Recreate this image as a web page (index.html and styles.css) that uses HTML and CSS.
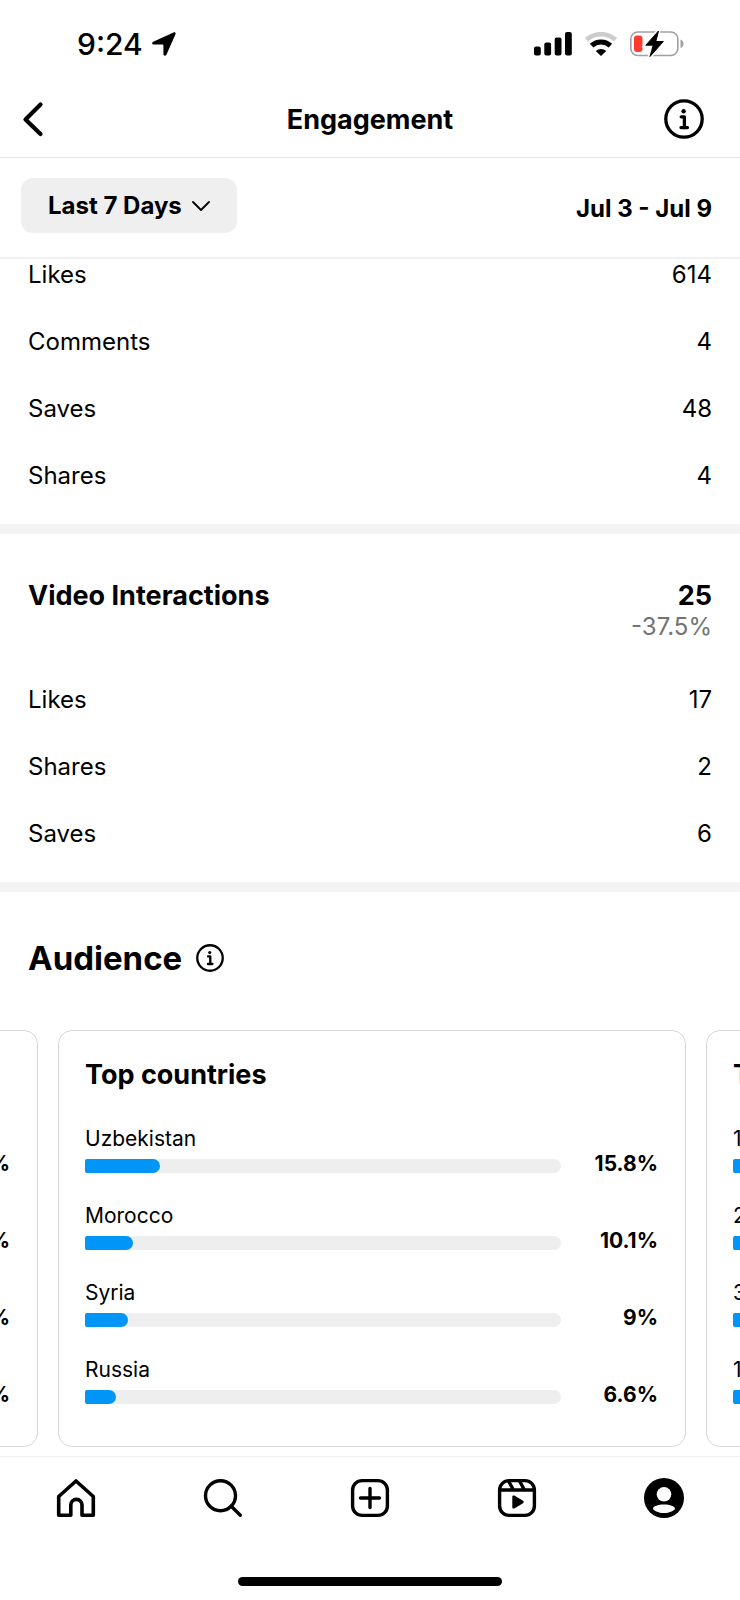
FILE: index.html
```html
<!DOCTYPE html>
<html lang="en">
<head>
    <meta charset="UTF-8">
    <meta name="viewport" content="width=device-width, initial-scale=1.0">
    <title>Engagement</title>
    <link rel="stylesheet" href="styles.css">
</head>
<body>
    <div class="status-bar">
        <div class="status-left">
            <span class="time">9:24</span>
            <svg width="24" height="24" viewBox="0 0 24 24" aria-hidden="true">
                <path d="M1.2 9.800 21.500.5c1.500-.6 2.500.4 1.900 1.900L14.400 22.700c-.7 1.500-3 1.200-3-.6v-8.700a.8.8 0 0 0-.8-.8H1.900C-.1 12.600-.4 10.500 1.200 9.800z"/>
            </svg>
        </div>
        <div class="status-right">
            <svg width="38" height="24" viewBox="0 0 38 24" aria-hidden="true">
                <rect x="0" y="14.500" width="6.800" height="9" rx="2"/>
                <rect x="10.300" y="10.500" width="6.800" height="13" rx="2"/>
                <rect x="20.700" y="5.500" width="6.800" height="18" rx="2"/>
                <rect x="31" y="0" width="6.800" height="23.500" rx="2"/>
            </svg>
            <svg width="34" height="24" viewBox="0 0 34 24" aria-hidden="true">
                <path d="M2.500 7.800A21.500 21.500 0 0 1 31.500 7.800" fill="none" stroke="#cccccc" stroke-width="4.600"/>
                <path d="M7.600 13.600A13.800 13.800 0 0 1 26.400 13.600" fill="none" stroke="#000" stroke-width="5"/>
                <path d="M17 24l-5.200-5a8 8 0 0 1 10.400 0z"/>
            </svg>
            <svg width="54" height="26" viewBox="0 0 54 26" aria-hidden="true">
                <rect x=".8" y="1" width="47" height="23.500" rx="7" fill="none" stroke="#a0a0a0" stroke-width="1.600"/>
                <path d="M50.500 8.500c4 1.500 4 7 0 8.500z" fill="#a0a0a0"/>
                <rect x="4" y="4.500" width="8.500" height="16.500" rx="3" fill="#ff3b30"/>
                <path d="M28.500 0 15.800 14.200h7.400L20 25.500l13.300-15h-7.500z" stroke="#fff" stroke-width="4"/>
                <path d="M28.500 0 15.800 14.200h7.400L20 25.500l13.300-15h-7.500z" stroke="#000" stroke-linejoin="round"/>
            </svg>
        </div>
    </div>

    <header class="header">
        <button class="icon-button back" aria-label="Back">
            <svg width="40" height="40" viewBox="0 0 40 40" fill="none" stroke="#000" stroke-width="4.200" stroke-linecap="round" stroke-linejoin="round">
                <path d="M18.500 5.500 3.500 20.500 18.500 35"/>
            </svg>
        </button>
        <h1 class="title">Engagement</h1>
        <button class="icon-button info" aria-label="Information">
            <svg width="40" height="40" viewBox="0 0 40 40" fill="none" stroke="#000" stroke-width="3.300">
                <circle cx="20" cy="20" r="18.200"/>
                <circle cx="19.600" cy="12.300" r="2.200" fill="#000" stroke="none"/>
                <path d="M17.200 17.800h3.200v11M17 28.600h6.500" stroke-linecap="round" stroke-linejoin="round"/>
            </svg>
        </button>
    </header>

    <div class="filter-bar">
        <button class="period">
            Last 7 Days
            <svg width="18" height="12" viewBox="0 0 18 12" fill="none" stroke="#000" stroke-width="1.800" stroke-linecap="round" stroke-linejoin="round" aria-hidden="true">
                <path d="M1 2 9 10 17 2"/>
            </svg>
        </button>
        <span class="dates">Jul 3 - Jul 9</span>
    </div>

    <main>
        <section class="section first">
            <table class="stats">
                <tr><th scope="row">Likes</th><td>614</td></tr>
                <tr><th scope="row">Comments</th><td>4</td></tr>
                <tr><th scope="row">Saves</th><td>48</td></tr>
                <tr><th scope="row">Shares</th><td>4</td></tr>
            </table>
        </section>

        <section class="section">
            <div class="section-head">
                <h2>Video Interactions</h2>
                <div class="total">
                    <strong>25</strong>
                    <span class="change">-37.5%</span>
                </div>
            </div>
            <table class="stats">
                <tr><th scope="row">Likes</th><td>17</td></tr>
                <tr><th scope="row">Shares</th><td>2</td></tr>
                <tr><th scope="row">Saves</th><td>6</td></tr>
            </table>
        </section>

        <section class="audience">
            <div class="audience-head">
                <h2>Audience</h2>
                <button class="icon-button" aria-label="About audience">
                    <svg width="28" height="28" viewBox="0 0 40 40" fill="none" stroke="#000" stroke-width="3.300">
                        <circle cx="20" cy="20" r="18.200"/>
                        <circle cx="19.600" cy="12.300" r="2.200" fill="#000" stroke="none"/>
                        <path d="M17.200 17.800h3.200v11M17 28.600h6.500" stroke-linecap="round" stroke-linejoin="round"/>
                    </svg>
                </button>
            </div>

            <div class="cards">
                <article class="card">
                    <h3></h3>
                    <ul>
                        <li><span class="name"></span><div class="bar-row"><div class="bar"></div><b>%</b></div></li>
                        <li><span class="name"></span><div class="bar-row"><div class="bar"></div><b>%</b></div></li>
                        <li><span class="name"></span><div class="bar-row"><div class="bar"></div><b>%</b></div></li>
                        <li><span class="name"></span><div class="bar-row"><div class="bar"></div><b>%</b></div></li>
                    </ul>
                </article>
                <article class="card">
                    <h3>Top countries</h3>
                    <ul>
                        <li><span class="name">Uzbekistan</span><div class="bar-row"><div class="bar"><div class="fill" style="width: 15.8%"></div></div><b>15.8%</b></div></li>
                        <li><span class="name">Morocco</span><div class="bar-row"><div class="bar"><div class="fill" style="width: 10.1%"></div></div><b>10.1%</b></div></li>
                        <li><span class="name">Syria</span><div class="bar-row"><div class="bar"><div class="fill" style="width: 9%"></div></div><b>9%</b></div></li>
                        <li><span class="name">Russia</span><div class="bar-row"><div class="bar"><div class="fill" style="width: 6.6%"></div></div><b>6.6%</b></div></li>
                    </ul>
                </article>
                <article class="card">
                    <h3>T</h3>
                    <ul>
                        <li><span class="name">1</span><div class="bar-row"><div class="bar"><div class="fill" style="width: 10%"></div></div></div></li>
                        <li><span class="name">2</span><div class="bar-row"><div class="bar"><div class="fill" style="width: 10%"></div></div></div></li>
                        <li><span class="name">3</span><div class="bar-row"><div class="bar"><div class="fill" style="width: 10%"></div></div></div></li>
                        <li><span class="name">1</span><div class="bar-row"><div class="bar"><div class="fill" style="width: 10%"></div></div></div></li>
                    </ul>
                </article>
            </div>
        </section>
    </main>

    <nav class="tab-bar">
        <div class="tabs">
            <a href="#" aria-label="Home">
                <svg width="40" height="40" viewBox="0 0 40 40" fill="none" stroke="#000" stroke-width="3.600" stroke-linejoin="round">
                    <path d="M20 3 37.300 18.500v18.700H26V27a5.300 5.300 0 0 0-11.200 0v10.200H2.700V18.500z"/>
                </svg>
            </a>
            <a href="#" aria-label="Search">
                <svg width="40" height="40" viewBox="0 0 40 40" fill="none" stroke="#000" stroke-width="3.400" stroke-linecap="round">
                    <circle cx="17.500" cy="17.700" r="15"/>
                    <path d="M28.500 28.500 37.300 37.300"/>
                </svg>
            </a>
            <a href="#" aria-label="New post">
                <svg width="40" height="40" viewBox="0 0 40 40" fill="none" stroke="#000" stroke-width="3.400" stroke-linecap="round">
                    <rect x="2.600" y="2.600" width="34.800" height="34.800" rx="9.500"/>
                    <path d="M20 10.500v19M10.500 20h19"/>
                </svg>
            </a>
            <a href="#" aria-label="Reels">
                <svg width="40" height="40" viewBox="0 0 40 40" fill="none" stroke="#000" stroke-width="3.400">
                    <rect x="2.600" y="2.600" width="34.800" height="34.800" rx="9.500"/>
                    <path d="M3 12h34M11.500 3l5 9M22.500 3l5 9"/>
                    <path d="M15.300 18.800v10.400c0 1.200 1 1.700 2 1.200l8.700-5.200c1-.6 1-1.800 0-2.400l-8.700-5.200c-1-.5-2 0-2 1.200z" fill="#000" stroke="none"/>
                </svg>
            </a>
            <a href="#" aria-label="Profile">
                <svg width="40" height="40" viewBox="0 0 40 40">
                    <circle cx="20" cy="20" r="20"/>
                    <circle cx="20" cy="16.300" r="7.300" fill="#fff"/>
                    <path d="M9 30.500c0-2 5-4 11-4s11 2 11 4c0 1.800-5.500 4.600-11 4.600s-11-2.800-11-4.600z" fill="#fff"/>
                </svg>
            </a>
        </div>
        <div class="home-indicator"></div>
    </nav>
</body>
</html>
```
FILE: styles.css
```css
* {
    box-sizing: border-box;
}
body {
    margin: 0;
    min-height: 100vh;
    display: flex;
    flex-direction: column;
    font-family: Inter, "Liberation Sans", sans-serif;
    font-size: 24px;
    line-height: 32px;
    color: #000;
    background-color: #fff;
}
h1, h2, h3, ul {
    margin: 0;
    padding: 0;
}
button {
    border: 0;
    font: inherit;
    color: inherit;
    cursor: pointer;
}
svg {
    display: block;
}

/* status bar */
.status-bar {
    display: flex;
    justify-content: space-between;
    align-items: center;
    height: 88px;
    padding: 0 56px 0 77px;
}
.status-left {
    display: flex;
    align-items: center;
    gap: 9px;
}
.time {
    font-size: 30px;
    font-weight: 500;
}
.status-right {
    display: flex;
    align-items: center;
    gap: 12px;
}

/* header */
.header {
    display: grid;
    grid-template-columns: 1fr auto 1fr;
    align-items: center;
    height: 70px;
    padding: 0 36px 8px 22px;
    border-bottom: 1px solid #e3e3e3;
}
.title {
    padding: 2px 0 0 14px;
    font-size: 27px;
    font-weight: 700;
}
.icon-button {
    padding: 0;
    background: none;
}
.back {
    justify-self: start;
}
.info {
    justify-self: end;
}

/* filter bar */
.filter-bar {
    display: flex;
    justify-content: space-between;
    align-items: center;
    height: 101px;
    padding: 0 28px 4px 21px;
    border-bottom: 2px solid #f1f1f1;
    font-weight: 700;
}
.period {
    display: flex;
    align-items: center;
    gap: 10px;
    height: 55px;
    padding: 0 27px;
    border-radius: 12px;
    background-color: #efefef;
}
.dates {
    padding-top: 6px;
}

/* stats */
.section {
    padding: 46px 28px 32px;
    border-bottom: 10px solid #f4f4f4;
}
.section.first {
    padding-top: 0;
}
.section-head {
    display: flex;
    justify-content: space-between;
    align-items: flex-start;
    margin-bottom: 42px;
}
.section-head h2, .section-head strong, .card h3 {
    font-size: 27px;
    font-weight: 700;
}
.total {
    display: flex;
    flex-direction: column;
    align-items: flex-end;
}
.change {
    line-height: 30px;
    color: #737373;
}
.stats {
    width: 100%;
    border-collapse: collapse;
}
.stats th, .stats td {
    padding: 0;
    font-weight: 400;
    text-align: left;
}
.stats td {
    text-align: right;
}
.stats tr + tr th, .stats tr + tr td {
    padding-top: 35px;
}

/* audience */
.audience {
    padding: 46px 0 9px;
}
.audience-head {
    display: flex;
    align-items: center;
    gap: 14px;
    padding: 0 28px;
    margin-bottom: 52px;
}
.audience-head h2 {
    font-size: 33px;
    line-height: 40px;
    font-weight: 700;
}
.cards {
    display: flex;
    justify-content: center;
    gap: 20px;
    padding-left: 4px;
    overflow: hidden;
}
.card {
    flex: 0 0 calc(100% - 108px);
    padding: 28px 27px 42px 26px;
    border: 1px solid #d6d6d6;
    border-radius: 14px;
}
.card h3 {
    height: 32px;
    margin-bottom: 36px;
}
.card ul {
    display: flex;
    flex-direction: column;
    gap: 31px;
    list-style: none;
}
.name {
    display: block;
    height: 24px;
    margin-bottom: 2px;
    font-size: 21px;
    line-height: 24px;
}
.bar-row {
    display: grid;
    grid-template-columns: 1fr 97px;
    align-items: end;
    height: 20px;
}
.bar-row b {
    font-size: 21px;
    line-height: 18px;
    font-weight: 700;
    text-align: right;
}
.bar {
    height: 14px;
    border-radius: 2px 7px 7px 2px;
    background-color: #eee;
}
.fill {
    height: 14px;
    border-radius: 2px 7px 7px 2px;
    background-color: #0095f6;
}

/* tab bar */
.tab-bar {
    margin-top: auto;
    padding-bottom: 14px;
    border-top: 1px solid #efefef;
}
.tabs {
    display: grid;
    grid-template-columns: repeat(5, 1fr);
    justify-items: center;
    padding: 21px 2px 59px;
}
.home-indicator {
    width: 264px;
    height: 9px;
    margin: 0 auto;
    border-radius: 5px;
    background-color: #000;
}
```
